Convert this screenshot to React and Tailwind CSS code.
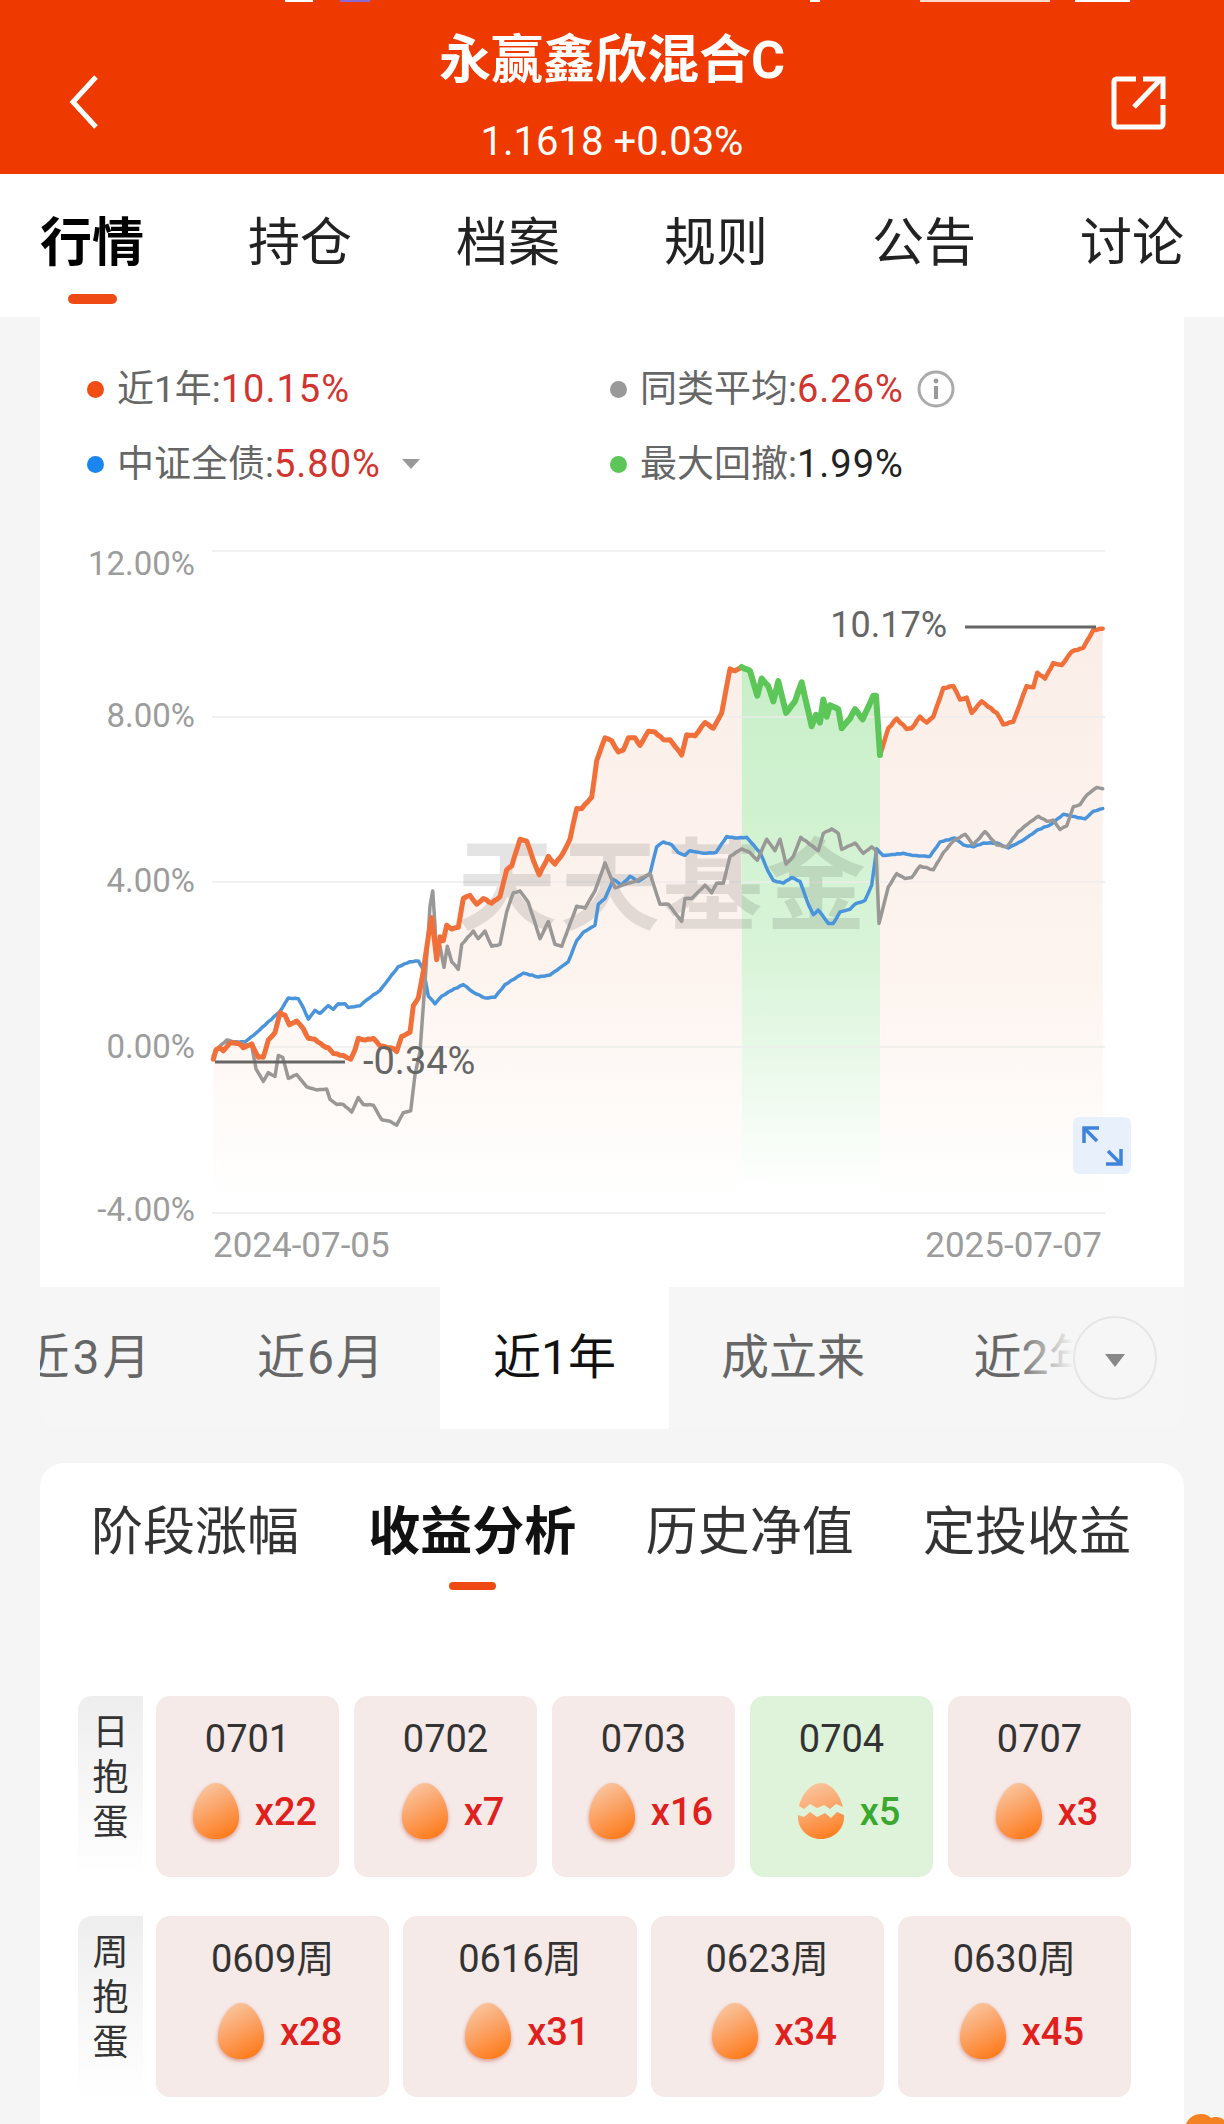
import React from 'react';

const from3 = ([x, y]) => [180 + x / 3, 600 + y / 2.613];
const from4 = ([x, y]) => [680 + x / 3, 600 + y / 2.613];

const orangeA = [[100,1200],[108,1175],[120,1170],[130,1178],[150,1158],[175,1158],[190,1170],[215,1160],[235,1195],[250,1195],[265,1150],[285,1130],[300,1078],[315,1085],[328,1110],[350,1100],[370,1120],[385,1145],[405,1148],[430,1165],[445,1170],[460,1185],[490,1190],[512,1200],[525,1175],[535,1145],[555,1150],[580,1145],[600,1165],[640,1172],[650,1180],[665,1140],[690,1130],[700,1060],[715,1040],[730,970],[745,880],[755,830],[762,880],[770,940],[780,880],[790,890],[800,850],[815,860],[835,855],[850,780],[870,772],[890,795],[910,780],[935,792],[960,775],[980,705],[995,695],[1020,625],[1040,630],[1060,680],[1078,718],[1105,670],[1125,690],[1150,660],[1170,625],[1190,545],[1205,545],[1235,515],[1250,420],[1275,360],[1295,368],[1315,397],[1330,392],[1345,360],[1365,360],[1380,380],[1405,343],[1425,345],[1450,365],[1470,365],[1505,405]];
const orangeB = [[20,352],[45,355],[75,320],[100,335],[125,295],[150,180],[165,185],[185,175]];
const greenB = [[185,175],[210,185],[232,250],[245,205],[265,225],[280,265],[295,212],[318,295],[345,265],[365,215],[395,330],[408,300],[420,320],[430,260],[440,305],[450,275],[475,285],[485,335],[510,310],[525,285],[548,312],[580,250],[588,250],[600,405]];
const orangeC = [[600,405],[625,335],[650,310],[680,337],[695,335],[720,305],[740,320],[760,305],[790,230],[820,225],[840,260],[860,255],[875,295],[905,265],[950,295],[970,325],[1000,318],[1040,225],[1060,228],[1072,190],[1095,205],[1120,165],[1145,170],[1175,135],[1210,125],[1240,78],[1268,75]];
const grayA = [[100,1190],[115,1170],[140,1150],[215,1165],[228,1225],[250,1258],[265,1235],[285,1245],[295,1190],[308,1195],[325,1250],[350,1240],[380,1272],[410,1280],[440,1278],[450,1305],[470,1318],[490,1318],[515,1338],[535,1300],[550,1318],[580,1320],[605,1358],[630,1362],[650,1372],[670,1340],[692,1335],[705,1240],[720,1180],[735,1000],[750,800],[758,760],[765,850],[770,940],[780,905],[792,960],[802,905],[815,945],[835,965],[845,900],[880,865],[895,885],[915,865],[935,905],[960,900],[980,815],[1000,765],[1020,760],[1045,790],[1080,885],[1105,840],[1125,900],[1145,905],[1160,870],[1190,800],[1215,805],[1245,760],[1275,687],[1305,752],[1345,740],[1365,735],[1410,715],[1440,795],[1465,795],[1505,840]];
const grayB = [[15,780],[35,780],[75,745],[95,765],[110,740],[130,740],[150,670],[185,650],[210,660],[232,680],[260,625],[285,655],[300,625],[318,690],[340,670],[362,620],[415,655],[430,610],[455,598],[475,610],[485,652],[525,635],[550,662],[575,645],[588,655],[597,845],[625,750],[650,715],[675,728],[695,725],[720,695],[760,705],[790,660],[820,630],[855,612],[880,640],[915,605],[950,640],[980,645],[1015,605],[1050,580],[1075,565],[1100,578],[1120,575],[1140,600],[1160,590],[1180,540],[1200,535],[1220,510],[1250,490],[1268,493]];
const blueA = [[140,1155],[195,1155],[230,1130],[300,1075],[325,1040],[355,1042],[370,1065],[385,1095],[405,1072],[420,1080],[445,1060],[460,1070],[475,1055],[495,1055],[505,1065],[540,1060],[560,1045],[600,1020],[625,992],[655,958],[690,945],[715,943],[730,965],[745,1035],[765,1055],[785,1035],[815,1020],[850,1005],[880,1025],[915,1040],[945,1038],[975,1005],[1030,975],[1075,985],[1110,980],[1165,945],[1190,890],[1210,868],[1245,850],[1255,795],[1275,780],[1300,730],[1325,745],[1350,722],[1375,735],[1410,715],[1430,645],[1450,632],[1475,640],[1495,660]];
const blueB = [[15,667],[30,655],[70,662],[108,660],[140,618],[165,622],[200,620],[240,660],[265,710],[280,733],[310,740],[335,725],[360,735],[385,795],[400,822],[415,810],[445,845],[460,845],[480,815],[510,808],[525,795],[555,785],[575,745],[590,650],[610,668],[670,662],[700,668],[750,670],[780,632],[825,622],[850,640],[880,645],[910,635],[950,635],[985,648],[1025,630],[1075,600],[1110,588],[1150,560],[1175,565],[1215,572],[1240,552],[1268,545]];

// split long segments and shake them a little, the real lines are daily data
const rough = (pts, amp) => {
  const out = [];
  pts.forEach((p, i) => {
    if (i === 0) { out.push(p); return; }
    const prev = pts[i - 1];
    const steps = Math.max(1, Math.round((p[0] - prev[0]) / 3));
    for (let s = 1; s <= steps; s++) {
      const t = s / steps;
      const n = s === steps ? 0 : Math.sin(prev[0] * 12.9 + s * 78.2) * amp;
      out.push([prev[0] + (p[0] - prev[0]) * t, prev[1] + (p[1] - prev[1]) * t + n]);
    }
  });
  return out;
};
const line = (pts) => 'M' + pts.map((p) => p[0].toFixed(1) + ' ' + p[1].toFixed(1)).join('L');
const area = (pts, bottom) => line(pts) + `L${pts[pts.length - 1][0].toFixed(1)} ${bottom}L${pts[0][0].toFixed(1)} ${bottom}Z`;

const orangeLeft = rough([...orangeA.map(from3), ...orangeB.map(from4)], 0.45);
const greenPts = rough(greenB.map(from4), 0.4);
const orangeRight = rough(orangeC.map(from4), 0.45);
const grayPts = rough([...grayA.map(from3), ...grayB.map(from4)], 0.35);
const bluePts = rough([...blueA.map(from3), ...blueB.map(from4)], 0.3);

const gridLines = [551, 717, 882, 1047, 1213];
const yLabels = [['12.00%', 575], ['8.00%', 727], ['4.00%', 892], ['0.00%', 1058], ['-4.00%', 1221]];

function Chart() {
  return (
    <svg className="block" width="1144" height="798" viewBox="40 489 1144 798">
      <defs>
        <linearGradient id="orangeFill" gradientUnits="userSpaceOnUse" x1="0" y1="640" x2="0" y2="1200">
          <stop offset="0" stopColor="#fbeee8" />
          <stop offset="0.6" stopColor="#fdf4ef" />
          <stop offset="1" stopColor="#ffffff" />
        </linearGradient>
        <linearGradient id="greenFill" gradientUnits="userSpaceOnUse" x1="0" y1="680" x2="0" y2="1190">
          <stop offset="0" stopColor="#c9efc9" />
          <stop offset="0.55" stopColor="#d9f4d9" />
          <stop offset="1" stopColor="#ffffff" />
        </linearGradient>
      </defs>
      <path d={area(orangeLeft, 1200)} fill="url(#orangeFill)" />
      <path d={area(orangeRight, 1200)} fill="url(#orangeFill)" />
      <path d={area(greenPts, 1200)} fill="url(#greenFill)" />
      {gridLines.map((y) => (
        <line key={y} x1="212" x2="1105" y1={y} y2={y} stroke="#ececec" strokeWidth="1.5" />
      ))}
      <text x="663" y="922" textAnchor="middle" fontSize="100" fontWeight="700" letterSpacing="3" fill="#000" opacity="0.1">天天基金</text>
      {yLabels.map(([t, y]) => (
        <text key={t} x="195" y={y} textAnchor="end" fontSize="33" fill="#9c9c9c">{t}</text>
      ))}
      <text x="213" y="1257" fontSize="35" fill="#9c9c9c">2024-07-05</text>
      <text x="1102" y="1257" textAnchor="end" fontSize="35" fill="#9c9c9c">2025-07-07</text>
      <g fill="none" strokeLinejoin="round" strokeLinecap="round">
        <path d={line(bluePts)} stroke="#4a94dc" strokeWidth="3.5" />
        <path d={line(grayPts)} stroke="#999896" strokeWidth="3.5" />
        <path d={line(orangeLeft)} stroke="#f1703a" strokeWidth="5" />
        <path d={line(orangeRight)} stroke="#f1703a" strokeWidth="4.5" />
        <path d={line(greenPts)} stroke="#5cc658" strokeWidth="6" />
      </g>
      <line x1="965" x2="1096" y1="627" y2="627" stroke="#666" strokeWidth="3" />
      <text x="947" y="637" textAnchor="end" fontSize="36" fill="#666">10.17%</text>
      <line x1="215" x2="345" y1="1062" y2="1062" stroke="#666" strokeWidth="3" />
      <text x="363" y="1074" fontSize="38" fill="#666">-0.34%</text>
      <rect x="1073" y="1117" width="58" height="57" rx="6" fill="#e8f1fb" />
      <g fill="none" stroke="#3f83dc" strokeWidth="3.5">
        <path d="M1084 1143V1128H1099" />
        <path d="M1084 1128L1097 1141" />
        <path d="M1121 1149V1164H1106" />
        <path d="M1121 1164L1108 1151" />
      </g>
    </svg>
  );
}

function Egg() {
  return (
    <svg width="48" height="60" viewBox="0 0 48 60" className="blur-[0.5px] drop-shadow-[0_2px_2px_rgba(190,90,70,0.55)]">
      <defs>
        <linearGradient id="eggFill" x1="0.25" y1="0" x2="0.7" y2="1">
          <stop offset="0" stopColor="#f9c8a2" />
          <stop offset="0.45" stopColor="#fba469" />
          <stop offset="1" stopColor="#ff7a18" />
        </linearGradient>
      </defs>
      <path d="M24 1C36 1 47 20 47 35C47 49 37 57 24 57C11 57 1 49 1 35C1 20 12 1 24 1Z" fill="url(#eggFill)" />
    </svg>
  );
}

function BrokenEgg() {
  return (
    <svg width="48" height="60" viewBox="0 0 48 60" className="blur-[0.4px]">
      <defs>
        <linearGradient id="brokenFill" gradientUnits="userSpaceOnUse" x1="12" y1="0" x2="34" y2="58">
          <stop offset="0" stopColor="#f9c8a2" />
          <stop offset="0.5" stopColor="#fba469" />
          <stop offset="1" stopColor="#ff7a18" />
        </linearGradient>
      </defs>
      <path d="M24 1C34 1 43 12 46 25L39 22L33 27L27 23L20 26L13 22L7 27L2 24C5 12 14 1 24 1Z" fill="url(#brokenFill)" />
      <path d="M1 33L7 35L13 30L20 35L28 31L34 36L40 30L47 33C48 47 37 57 24 57C11 57 0 47 1 33Z" fill="url(#brokenFill)" />
    </svg>
  );
}

function EggCard({ date, count, broken }) {
  return (
    <div className={`flex flex-col items-center rounded-[14px] pt-[21px] ${broken ? 'bg-[#dff3db]' : 'bg-[#f6eae8]'}`}>
      <div className="text-[38px] leading-[44px] text-[#333]">{date}</div>
      <div className="ml-[14px] mt-[21px] flex items-center gap-[15px]">
        {broken ? <BrokenEgg /> : <Egg />}
        <span className={`text-[38px] leading-[44px] font-medium ${broken ? 'text-[#3aa82e]' : 'text-[#e0201c]'}`}>x{count}</span>
      </div>
    </div>
  );
}

function RowLabel({ text }) {
  return (
    <div className="flex w-[65px] shrink-0 flex-col items-center rounded-tl-[14px] bg-gradient-to-b from-[#eeeeee] to-white pt-[15px] text-[36px] leading-[45px] text-[#333]">
      {text.split('').map((c) => <span key={c}>{c}</span>)}
    </div>
  );
}

function LegendItem({ dot, label, value, valueColor, children }) {
  return (
    <div className="flex h-[50px] items-center gap-[13px] text-[37px] text-[#666]">
      <span className={`h-[17px] w-[17px] rounded-full ${dot}`} />
      <span>{label}:<span className={`text-[38px] tracking-[1px] ${valueColor}`}>{value}</span></span>
      {children}
    </div>
  );
}

export default function App() {
  return (
    <div className="relative h-[2124px] w-[1224px] overflow-hidden bg-[#f5f5f5] font-['Roboto','Noto_Sans_CJK_SC',sans-serif]">
      {/* red header */}
      <div className="relative h-[174px] bg-[#ee3a00] text-white">
        <div className="flex h-[2px]">
          <span className="ml-[285px] w-[28px] bg-white" />
          <span className="ml-[27px] w-[30px] bg-[#8a6ad0]" />
          <span className="ml-[440px] w-[10px] bg-white" />
          <span className="ml-[100px] w-[130px] bg-[#ffd9c9]" />
          <span className="ml-[25px] w-[55px] bg-white" />
        </div>
        <div className="pt-[26px] text-center text-[52px] font-bold leading-[66px]">永赢鑫欣混合C</div>
        <div className="mt-[24px] text-center text-[40px] leading-[48px]">1.1618 +0.03%</div>
        <svg className="absolute left-[68px] top-[74px]" width="32" height="56" viewBox="0 0 32 56" fill="none" stroke="white" strokeWidth="5">
          <path d="M28 3L5 28L28 53" />
        </svg>
        <svg className="absolute left-[1110px] top-[74px]" width="58" height="58" viewBox="0 0 58 58" fill="none" stroke="white" strokeWidth="5">
          <path d="M26 5H6A3 3 0 0 0 4 8V50A3 3 0 0 0 7 53H50A3 3 0 0 0 53 50V31" />
          <path d="M24 33L50 6" />
          <path d="M33 5H53V25" />
        </svg>
      </div>

      {/* main tabs */}
      <div className="flex h-[143px] justify-between bg-white px-[40px] pt-[37px] text-[52px] leading-[66px] text-[#222]">
        {['行情', '持仓', '档案', '规则', '公告', '讨论'].map((t, i) => (
          <div key={t} className={`flex flex-col items-center ${i === 0 ? 'font-bold text-black' : ''}`}>
            {t}
            {i === 0 && <span className="mt-[17px] h-[10px] w-[49px] rounded-full bg-[#f04a14]" />}
          </div>
        ))}
      </div>

      {/* chart card */}
      <div className="relative mx-[40px] w-[1144px] rounded-b-[20px] bg-white">
        <div className="grid grid-cols-[523px_1fr] gap-y-[25px] pl-[47px] pt-[47px]">
          <LegendItem dot="bg-[#f04e14]" label="近1年" value="10.15%" valueColor="text-[#d0352f]" />
          <LegendItem dot="bg-[#999]" label="同类平均" value="6.26%" valueColor="text-[#d0352f]">
            <svg width="38" height="38" viewBox="0 0 38 38" fill="none">
              <circle cx="19" cy="19" r="17" stroke="#aaa" strokeWidth="3" />
              <circle cx="19" cy="11" r="2.4" fill="#999" />
              <rect x="17" y="16" width="4" height="13" fill="#999" />
            </svg>
          </LegendItem>
          <LegendItem dot="bg-[#1a86f0]" label="中证全债" value="5.80%" valueColor="text-[#d0352f]">
            <span className="ml-[8px] h-0 w-0 border-x-[9px] border-t-[10px] border-x-transparent border-t-[#999]" />
          </LegendItem>
          <LegendItem dot="bg-[#5cc658]" label="最大回撤" value="1.99%" valueColor="text-[#222]" />
        </div>
        <Chart />

        {/* period tabs */}
        <div className="relative flex h-[142px] overflow-hidden rounded-b-[20px] bg-[#f6f6f6] text-[48px] text-[#666]">
          <div className="ml-[-68px] flex w-[231px] shrink-0 items-center justify-center tracking-[3px]">近3月</div>
          <div className="flex w-[237px] shrink-0 items-center justify-center tracking-[2px]">近6月</div>
          <div className="flex w-[229px] shrink-0 items-center justify-center bg-white text-[#111]">近1年</div>
          <div className="flex w-[248px] shrink-0 items-center justify-center">成立来</div>
          <div className="flex w-[236px] shrink-0 items-center justify-center">近2年</div>
          <div className="absolute right-0 top-0 flex h-full w-[170px] items-center justify-end bg-gradient-to-r from-transparent to-[#f6f6f6] to-[35%] pr-[27px]">
            <div className="flex h-[84px] w-[84px] items-center justify-center rounded-full border-2 border-[#e6e6e6] bg-[#f6f6f6]">
              <span className="mt-[4px] h-0 w-0 border-x-[10px] border-t-[13px] border-x-transparent border-t-[#888]" />
            </div>
          </div>
        </div>
      </div>

      {/* earnings card */}
      <div className="mx-[40px] mt-[34px] h-[700px] w-[1144px] rounded-t-[24px] bg-white pl-[38px] pr-[53px] pt-[36px]">
        <div className="flex justify-between pl-[13px] text-[52px] leading-[68px] text-[#333]">
          {['阶段涨幅', '收益分析', '历史净值', '定投收益'].map((t, i) => (
            <div key={t} className={`flex flex-col items-center ${i === 1 ? 'font-bold text-[#111]' : ''}`}>
              {t}
              {i === 1 && <span className="mt-[15px] h-[8px] w-[47px] rounded-full bg-[#f04a14]" />}
            </div>
          ))}
        </div>

        <div className="mt-[106px] flex h-[181px] gap-[13px]">
          <RowLabel text="日抱蛋" />
          <div className="grid flex-1 grid-cols-5 gap-[15px]">
            <EggCard date="0701" count="22" />
            <EggCard date="0702" count="7" />
            <EggCard date="0703" count="16" />
            <EggCard date="0704" count="5" broken />
            <EggCard date="0707" count="3" />
          </div>
        </div>

        <div className="mt-[39px] flex h-[181px] gap-[13px]">
          <RowLabel text="周抱蛋" />
          <div className="grid flex-1 grid-cols-4 gap-[14px]">
            <EggCard date="0609周" count="28" />
            <EggCard date="0616周" count="31" />
            <EggCard date="0623周" count="34" />
            <EggCard date="0630周" count="45" />
          </div>
        </div>
      </div>

      {/* floating mascot peeking in the corner */}
      <svg className="absolute left-[1186px] top-[2112px]" width="38" height="12" viewBox="0 0 38 12">
        <path d="M0 12C3 5 9 2 15 2C20 2 23 4 25 6C29 4 35 5 38 8V12Z" fill="#f58220" />
      </svg>
    </div>
  );
}
